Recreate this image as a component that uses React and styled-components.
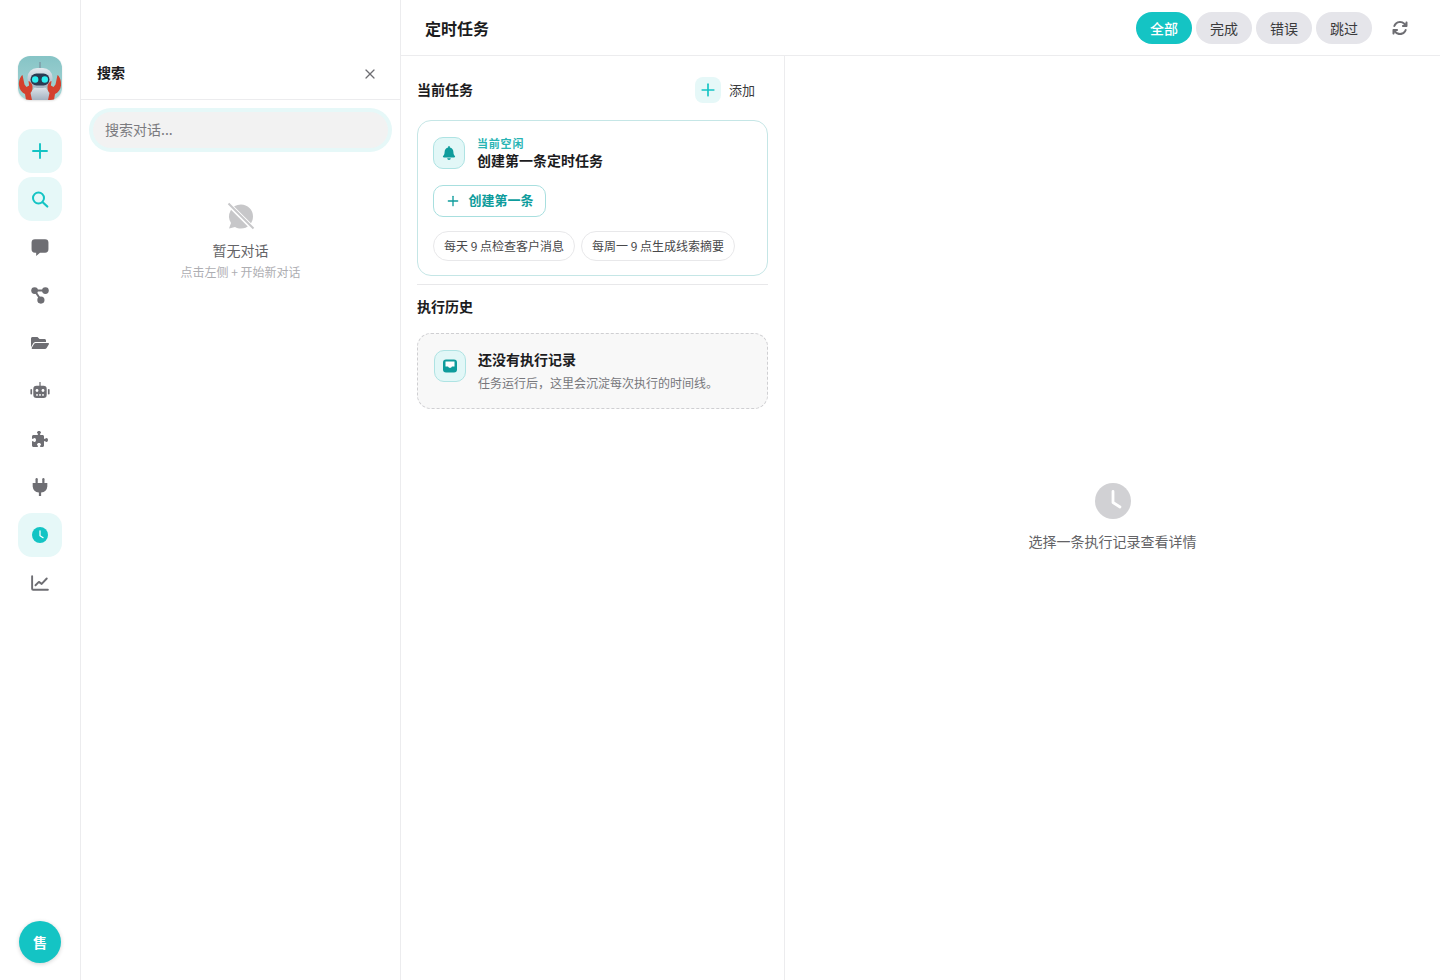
import React from "react";
import styled, { createGlobalStyle } from "styled-components";
import { FaBell, FaFolderOpen } from "react-icons/fa";
import { FaArrowsRotate, FaPuzzlePiece } from "react-icons/fa6";
import { Plus, X } from "lucide-react";

const teal = "#14c4c4";
const iconGrey = "#6e6e73";

const GlobalStyle = createGlobalStyle`
  html, body, #root { margin: 0; padding: 0; height: 100%; }
  body {
    background: #fff;
    color: #1c1c1e;
    font-family: "Noto Sans CJK SC", "Noto Sans", sans-serif;
  }
  * { box-sizing: border-box; }
`;

const Page = styled.div`
  display: flex;
  width: 1440px;
  height: 980px;
  overflow: hidden;
`;

const Rail = styled.nav`
  width: 81px;
  flex: none;
  display: flex;
  flex-direction: column;
  align-items: center;
  padding: 56px 0 17px;
  border-right: 1px solid #ececee;
`;

const Logo = styled.div`
  width: 44px;
  height: 44px;
  border-radius: 12px;
  overflow: hidden;
  margin-bottom: 29px;
  box-shadow: 0 1px 2px rgba(0, 0, 0, 0.12);
  svg { display: block; }
`;

const RailItem = styled.button`
  width: 44px;
  height: 44px;
  flex: none;
  margin-bottom: 4px;
  border: none;
  padding: 0;
  border-radius: 14px;
  display: flex;
  align-items: center;
  justify-content: center;
  color: ${(p) => (p.$active ? teal : iconGrey)};
  background: ${(p) => (p.$active ? "#e6f8f8" : "transparent")};
`;

const Avatar = styled.div`
  width: 42px;
  height: 42px;
  margin-top: auto;
  border-radius: 50%;
  background: ${teal};
  color: #fff;
  font-size: 14px;
  font-weight: 700;
  display: flex;
  align-items: center;
  justify-content: center;
  box-shadow: 0 1px 4px rgba(0, 0, 0, 0.18);
`;

const SearchPanel = styled.aside`
  width: 320px;
  flex: none;
  display: flex;
  flex-direction: column;
  border-right: 1px solid #ececee;
`;

const SearchHead = styled.div`
  height: 100px;
  padding: 61px 22px 0 16px;
  display: flex;
  align-items: flex-start;
  justify-content: space-between;
  border-bottom: 1px solid #ececee;
`;

const SearchTitle = styled.div`
  font-size: 14px;
  line-height: 22px;
  font-weight: 600;
`;

const CloseBtn = styled.div`
  display: flex;
  color: ${iconGrey};
  margin-top: 5px;
`;

const SearchField = styled.div`
  margin: 8px 8px 0 8px;
  height: 44px;
  padding: 4px;
  border-radius: 22px;
  background: #e6f8f8;
`;

const SearchInner = styled.div`
  height: 36px;
  padding: 0 12px;
  border-radius: 18px;
  background: #f2f2f2;
  font-size: 14px;
  line-height: 34px;
  color: #7b7b80;
`;

const EmptyChats = styled.div`
  margin-top: 50px;
  display: flex;
  flex-direction: column;
  align-items: center;
  color: #c7c7c9;
`;

const EmptyTitle = styled.div`
  margin-top: 9px;
  font-size: 14px;
  line-height: 22px;
  color: #636366;
`;

const EmptyHint = styled.div`
  margin-top: 2px;
  font-size: 12px;
  line-height: 18px;
  color: #aeaeb2;
`;

const Main = styled.main`
  flex: 1;
  min-width: 0;
  display: flex;
  flex-direction: column;
`;

const TopBar = styled.header`
  height: 56px;
  flex: none;
  padding: 0 24px;
  display: flex;
  align-items: center;
  border-bottom: 1px solid #ececee;
`;

const PageTitle = styled.h1`
  margin: 0 auto 0 0;
  font-size: 16px;
  line-height: 24px;
  font-weight: 600;
`;

const Filters = styled.div`
  display: flex;
  gap: 4px;
`;

const Pill = styled.button`
  width: 56px;
  height: 32px;
  border: none;
  padding: 0;
  border-radius: 16px;
  font: inherit;
  font-size: 14px;
  background: ${(p) => (p.$active ? teal : "#e5e5ea")};
  color: ${(p) => (p.$active ? "#fff" : "#3a3a3c")};
  font-weight: ${(p) => (p.$active ? 500 : 400)};
`;

const Refresh = styled.div`
  width: 32px;
  height: 32px;
  margin-left: 12px;
  display: flex;
  align-items: center;
  justify-content: center;
  color: ${iconGrey};
`;

const Body = styled.div`
  flex: 1;
  display: flex;
  min-height: 0;
`;

const TaskColumn = styled.section`
  width: 384px;
  flex: none;
  padding: 21px 16px 0;
  border-right: 1px solid #ececee;
`;

const SectionHead = styled.div`
  height: 26px;
  display: flex;
  align-items: center;
  justify-content: space-between;
  margin-bottom: 17px;
`;

const SectionTitle = styled.h2`
  margin: 0 0 2px;
  font-size: 14px;
  line-height: 20px;
  font-weight: 600;
  color: #1c1c1e;
`;

const AddBtn = styled.div`
  display: flex;
  align-items: center;
  gap: 8px;
  padding-right: 13px;
  font-size: 13px;
  color: #3a3a3c;
`;

const AddLabel = styled.span`
  line-height: 20px;
`;

const AddIcon = styled.div`
  width: 26px;
  height: 26px;
  border-radius: 8px;
  background: #e6f8f8;
  color: ${teal};
  display: flex;
  align-items: center;
  justify-content: center;
`;

const IdleCard = styled.div`
  height: 156px;
  padding: 16px 15px;
  border: 1px solid #c5e6e6;
  border-radius: 14px;
`;

const CardTop = styled.div`
  display: flex;
  gap: 12px;
  align-items: flex-start;
`;

const CardText = styled.div`
  margin-top: -1px;
`;

const IconTile = styled.div`
  width: 32px;
  height: 32px;
  flex: none;
  border-radius: 10px;
  background: #e2f7f7;
  border: 1px solid #aee3e3;
  color: #0e9c9c;
  display: flex;
  align-items: center;
  justify-content: center;
`;

const Eyebrow = styled.div`
  font-size: 11px;
  line-height: 14px;
  font-weight: 600;
  letter-spacing: 0.8px;
  color: #2ab4b4;
`;

const CardTitle = styled.div`
  font-size: 14px;
  line-height: 20px;
  font-weight: 600;
  color: #1c1c1e;
`;

const CreateBtn = styled.div`
  width: 113px;
  height: 32px;
  margin-top: 15px;
  border: 1px solid #a8dfdf;
  border-radius: 10px;
  display: flex;
  align-items: center;
  justify-content: center;
  gap: 7px;
  font-size: 13px;
  font-weight: 600;
  color: #0e9c9c;
`;

const CreateLabel = styled.span`
  line-height: 20px;
  margin-bottom: 2px;
`;

const Chips = styled.div`
  display: flex;
  gap: 6px;
  margin-top: 14px;
`;

const Chip = styled.div`
  height: 30px;
  padding: 0 10px;
  border: 1px solid #e8e8ea;
  border-radius: 15px;
  font-size: 12px;
  line-height: 28px;
  color: #48484a;
  white-space: nowrap;
`;

const Divider = styled.div`
  height: 1px;
  margin: 8px 0 11px;
  background: #e8e8ea;
`;

const HistoryTitle = styled(SectionTitle)`
  margin-bottom: 17px;
`;

const HistoryEmpty = styled.div`
  height: 76px;
  padding: 16px;
  display: flex;
  gap: 12px;
  border: 1px dashed #cfcfd2;
  border-radius: 14px;
  background: #f8f8f8;
`;

const HistoryHead = styled.div`
  font-size: 14px;
  line-height: 20px;
  font-weight: 600;
  color: #1c1c1e;
`;

const HistoryText = styled.div`
  margin-top: 5px;
  font-size: 12px;
  line-height: 18px;
  color: #77777c;
`;

const Detail = styled.section`
  flex: 1;
  display: flex;
  flex-direction: column;
  align-items: center;
  justify-content: center;
  gap: 11px;
  padding-bottom: 1px;
  color: #d1d1d4;
`;

const DetailText = styled.div`
  font-size: 14px;
  line-height: 22px;
  color: #636366;
`;

const RobotLogo = () => (
  <svg width="44" height="44" viewBox="0 0 44 44">
    <defs>
      <linearGradient id="logoBg" x1="0" y1="0" x2="0" y2="1">
        <stop offset="0" stopColor="#86c4c6" />
        <stop offset="1" stopColor="#a8d5d5" />
      </linearGradient>
      <linearGradient id="logoBody" x1="0" y1="0" x2="0" y2="1">
        <stop offset="0" stopColor="#e4e9ee" />
        <stop offset="1" stopColor="#a4b2c0" />
      </linearGradient>
    </defs>
    <rect width="44" height="44" fill="url(#logoBg)" />
    <path d="M22 6v7" stroke="#7d98a4" strokeWidth="1.4" />
    <path d="M12 44c0-9 4-14 10-14s10 5 10 14z" fill="url(#logoBody)" />
    <rect x="9.500" y="12" width="25" height="20" rx="9.500" fill="url(#logoBody)" />
    <rect x="12.500" y="17.500" width="19" height="12" rx="6" fill="#2b3b52" />
    <circle cx="17.200" cy="23.500" r="3.200" fill="#2ff0f2" />
    <circle cx="26.800" cy="23.500" r="3.200" fill="#2ff0f2" />
    <path d="M4.500 19C1.800 21 .6 25.500 1 29.500c.4 4.200 3 7 6 8.500l1 6h6l-1.500-7c2-2.200 2.600-5.200 1.600-8.200-.6-1.800-2-3.300-3.600-3.800l.6 4.500-2.600 1.500-2-2.500z" fill="#d4412e" />
    <path d="M39.500 19c2.700 2 3.900 6.500 3.500 10.500-.4 4.200-3 7-6 8.500l-1 6h-6l1.500-7c-2-2.200-2.600-5.200-1.600-8.200.6-1.800 2-3.300 3.600-3.800l-.6 4.500 2.600 1.500 2-2.500z" fill="#d4412e" />
  </svg>
);

const SearchGlyph = () => (
  <svg width="20" height="20" viewBox="0 0 20 20" fill="none" stroke="currentColor" strokeWidth="2" strokeLinecap="round">
    <circle cx="8.500" cy="9" r="5.500" />
    <path d="M12.700 13.200l4.600 4.300" strokeWidth="2.200" />
  </svg>
);

const ChatIcon = () => (
  <svg width="18" height="18" viewBox="0 0 16 16" fill="currentColor">
    <path d="M3.500 1h9A3 3 0 0 1 15.500 4v6a3 3 0 0 1-3 3H8l-3.400 3v-3H3.500a3 3 0 0 1-3-3V4a3 3 0 0 1 3-3z" />
  </svg>
);

const FlowIcon = () => (
  <svg width="18" height="18" viewBox="0 0 16 16" fill="currentColor">
    <circle cx="3.200" cy="4" r="3" />
    <circle cx="12.800" cy="4" r="3" />
    <circle cx="8.800" cy="12.500" r="3.200" />
    <path d="M3.200 4h9.600M3.200 4l5.600 8.500" stroke="currentColor" strokeWidth="1.800" />
  </svg>
);

const RobotIcon = () => (
  <svg width="20" height="20" viewBox="0 0 20 20" fill="currentColor">
    <rect x="9.400" y="1" width="1.200" height="4" />
    <rect x="3.300" y="4.700" width="13.400" height="12.300" rx="3.200" />
    <rect x=".4" y="8" width="1.700" height="5.500" rx=".8" />
    <rect x="17.900" y="8" width="1.700" height="5.500" rx=".8" />
    <circle cx="7" cy="9.500" r="1.400" fill="#fff" />
    <circle cx="13" cy="9.500" r="1.400" fill="#fff" />
    <rect x="6" y="13.300" width="2" height="1.300" fill="#fff" />
    <rect x="9" y="13.300" width="2" height="1.300" fill="#fff" />
    <rect x="12" y="13.300" width="2" height="1.300" fill="#fff" />
  </svg>
);

const PlugIcon = () => (
  <svg width="16" height="18" viewBox="0 0 14 16" fill="currentColor">
    <rect x="3" y="0" width="2" height="5" rx="1" />
    <rect x="9" y="0" width="2" height="5" rx="1" />
    <path d="M0.500 4.500h13v3a6 6 0 0 1-5.500 5.400V16H6v-3.100A6 6 0 0 1 .5 7.500z" />
  </svg>
);

const ChartIcon = () => (
  <svg width="18" height="18" viewBox="0 0 16 16" fill="none" stroke="currentColor" strokeWidth="1.700" strokeLinejoin="round" strokeLinecap="round">
    <path d="M1 2v11.200a.8.8 0 0 0 .8.800H15" />
    <path d="M4 10l3-3 2.500 1.800L14 4" />
  </svg>
);

const InboxIcon = () => (
  <svg width="16" height="16" viewBox="0 0 16 16">
    <rect x="1" y="1.500" width="14" height="13" rx="3" fill="currentColor" />
    <path d="M3.500 3.500h9v5h-2.500l-1 1.300H7l-1-1.300H3.500z" fill="#fff" />
  </svg>
);

const ChatOffIcon = () => (
  <svg width="28" height="28" viewBox="0 0 28 28">
    <path d="M14 2.500a12 12 0 0 1 0 24c-2.200 0-4.200-.5-6-1.500L2 26.500l2-5.500a12 12 0 0 1 10-18.500z" fill="currentColor" />
    <path d="M1 1.500L26.500 27" stroke="#fff" strokeWidth="4.500" />
    <path d="M1.500 1.500L26.500 26.500" stroke="currentColor" strokeWidth="2" />
  </svg>
);

const ClockBadge = ({ size }) => (
  <svg width={size} height={size} viewBox="0 0 36 36">
    <circle cx="18" cy="18" r="18" fill="currentColor" />
    <path d="M18 8.500V19.500l7 4.500" fill="none" stroke="#fff" strokeWidth="2.800" strokeLinecap="round" strokeLinejoin="round" />
  </svg>
);

const App = () => {
  return (
    <Page>
      <GlobalStyle />
      <Rail>
        <Logo><RobotLogo /></Logo>
        <RailItem $active><Plus size={24} strokeWidth={1.9} /></RailItem>
        <RailItem $active><SearchGlyph /></RailItem>
        <RailItem><ChatIcon /></RailItem>
        <RailItem><FlowIcon /></RailItem>
        <RailItem><FaFolderOpen size={18} /></RailItem>
        <RailItem><RobotIcon /></RailItem>
        <RailItem><FaPuzzlePiece size={16} /></RailItem>
        <RailItem><PlugIcon /></RailItem>
        <RailItem $active><ClockBadge size={16} /></RailItem>
        <RailItem><ChartIcon /></RailItem>
        <Avatar>售</Avatar>
      </Rail>

      <SearchPanel>
        <SearchHead>
          <SearchTitle>搜索</SearchTitle>
          <CloseBtn><X size={16} strokeWidth={1.8} /></CloseBtn>
        </SearchHead>
        <SearchField>
          <SearchInner>搜索对话...</SearchInner>
        </SearchField>
        <EmptyChats>
          <ChatOffIcon />
          <EmptyTitle>暂无对话</EmptyTitle>
          <EmptyHint>点击左侧 + 开始新对话</EmptyHint>
        </EmptyChats>
      </SearchPanel>

      <Main>
        <TopBar>
          <PageTitle>定时任务</PageTitle>
          <Filters>
            <Pill $active>全部</Pill>
            <Pill>完成</Pill>
            <Pill>错误</Pill>
            <Pill>跳过</Pill>
          </Filters>
          <Refresh><FaArrowsRotate size={16} /></Refresh>
        </TopBar>
        <Body>
          <TaskColumn>
            <SectionHead>
              <SectionTitle>当前任务</SectionTitle>
              <AddBtn>
                <AddIcon><Plus size={20} strokeWidth={2} /></AddIcon>
                <AddLabel>添加</AddLabel>
              </AddBtn>
            </SectionHead>
            <IdleCard>
              <CardTop>
                <IconTile><FaBell size={14} /></IconTile>
                <CardText>
                  <Eyebrow>当前空闲</Eyebrow>
                  <CardTitle>创建第一条定时任务</CardTitle>
                </CardText>
              </CardTop>
              <CreateBtn>
                <Plus size={16} strokeWidth={2} />
                <CreateLabel>创建第一条</CreateLabel>
              </CreateBtn>
              <Chips>
                <Chip>每天 9 点检查客户消息</Chip>
                <Chip>每周一 9 点生成线索摘要</Chip>
              </Chips>
            </IdleCard>
            <Divider />
            <HistoryTitle>执行历史</HistoryTitle>
            <HistoryEmpty>
              <IconTile><InboxIcon /></IconTile>
              <CardText>
                <HistoryHead>还没有执行记录</HistoryHead>
                <HistoryText>任务运行后，这里会沉淀每次执行的时间线。</HistoryText>
              </CardText>
            </HistoryEmpty>
          </TaskColumn>
          <Detail>
            <ClockBadge size={36} />
            <DetailText>选择一条执行记录查看详情</DetailText>
          </Detail>
        </Body>
      </Main>
    </Page>
  );
};

export default App;
